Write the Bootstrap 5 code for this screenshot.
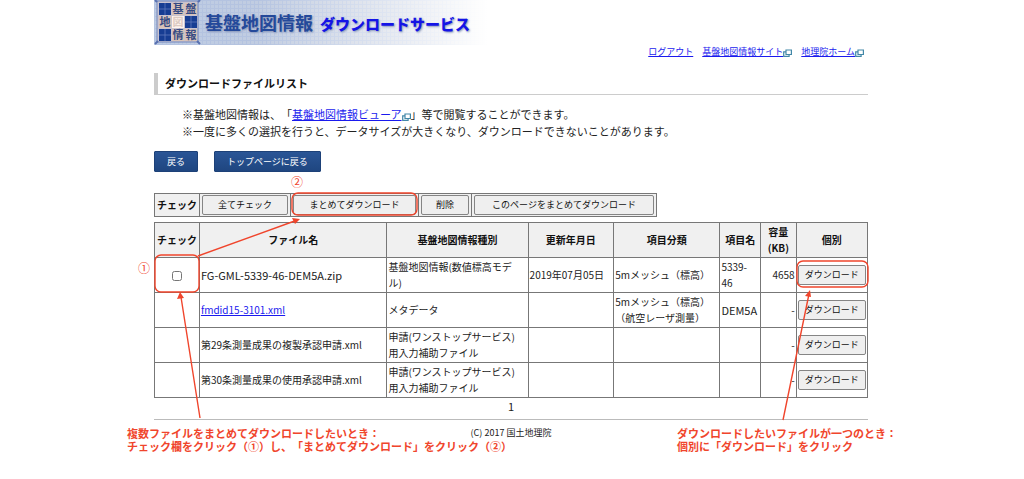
<!DOCTYPE html>
<html lang="ja">
<head>
<meta charset="utf-8">
<meta name="viewport" content="width=device-width, initial-scale=1">
<title>基盤地図情報 ダウンロードサービス</title>
<link href="https://cdn.jsdelivr.net/npm/bootstrap@5.3.0/dist/css/bootstrap.min.css" rel="stylesheet">
<style>
body{font-family:"Noto Sans CJK JP",sans-serif;font-size:11px;line-height:17px;color:#222;background:#fff;padding:0 2px 36px 0;text-spacing-trim:space-all}
a{color:#1a1aee;text-decoration:underline}
.page-wrap{max-width:714px}
.banner{height:45px;width:340px;max-width:100%;
 background:linear-gradient(90deg,rgba(255,255,255,0) 30%,#fff 98%),repeating-linear-gradient(0deg,#b4c3e0 0 1px,transparent 1px 4px),repeating-linear-gradient(90deg,#b4c3e0 0 1px,transparent 1px 4px),linear-gradient(90deg,#bccbe4,#ccd0da)}
.banner h1{font-size:18px;line-height:24px;font-weight:700;color:#24499a;text-shadow:1px 1px 2px #8795b8}
.banner h1 span{font-size:15px;font-weight:900;color:#1414e6;margin-left:7px}
.logo{width:47px;height:45px}
.top-links{font-size:9px;line-height:14px;gap:9px;padding-right:4px}
.win{width:9px;height:8px;vertical-align:-2px}
.list-title{font-size:11px;line-height:21px;font-weight:700;color:#111;border-left:4px solid #ccc;border-bottom:1px solid #ccc;padding-left:7px;margin:14px 0 11px}
.notes{margin:0 0 11px 28px}
.btn-nav{font-size:9px;line-height:19px;color:#fff;background:linear-gradient(#2a5596,#1f4680);border:1px solid #1d4178;border-radius:1px;padding:0 12px}
.btn-nav:hover{color:#fff;background:#1d4178}
.tool-nav{margin-bottom:21px}
.btn-plain{font-size:9px;line-height:18px;color:#111;background:#efefef;border:1px solid #858585;border-radius:2px;padding:0;width:100%;display:block}
.grid-table{border-collapse:collapse;font-size:10px;line-height:16px;color:#222;margin:0}
.grid-table th,.grid-table td{border:1px solid #777;padding:1px}
.grid-table th{background:#f0f0f0;text-align:center;color:#111;font-weight:700}
.grid-table td.tool{background:#f0f0f0;padding:1px 2px}
.files{table-layout:fixed;width:100%;margin-top:5px}
.files td{height:35px}
.files td.code{font-size:11px}
.files input{width:10px;height:10px;margin:0;vertical-align:middle}
.page-foot{border-top:1px solid #bbb;margin-top:4px;padding-top:6px;font-size:9px;line-height:13px}
.red{color:#f0452c}
.marks{inset:0;pointer-events:none}
.marks svg{left:0;top:0;overflow:visible}
.note-l,.note-r,.num{line-height:13px;font-weight:700;white-space:nowrap}
.note-l{left:-27px;top:427px}
.note-r{left:523px;top:427px}
.num{font-weight:400;font-size:12px}
.num-1{left:-16px;top:261px}
.num-2{left:137px;top:175px}
</style>
</head>
<body>
<svg class="d-none" aria-hidden="true">
 <symbol id="win" viewBox="0 0 9 8"><path d="M3 1h5.400v4.500H3zM3 2.800H.7v4.500h5.400V5.500" fill="none" stroke="#4288a8" stroke-width="1.2"/></symbol>
 <symbol id="tile" viewBox="0 0 12 12"><path d="M0 0h12v12H0z" fill="#173d93"/><path d="M6 0v12M0 6h12" stroke="#5f7abb" stroke-width=".8"/></symbol>
</svg>
<div class="page-wrap mx-auto position-relative">
 <header>
  <div class="banner d-flex align-items-center">
   <svg class="logo flex-shrink-0" viewBox="0 0 47 45" role="img" aria-label="基盤地図情報">
    <path d="M3 1h41v41H3z" fill="#c9c3cf" stroke="#7488bc"/>
    <path d="M1 0l2 2M46 0l-2 2M1 44l3-3M46 44l-3-3" stroke="#5870b0" stroke-width="2"/>
    <g fill="#d8c3b8"><path d="M18 3h12v12H18zM31 3h12v12H31zM5 16h12v12H5zM18 29h12v12H18zM31 29h12v12H31z"/></g>
    <path d="M18 16h12v12H18z" fill="#fff5ee"/>
    <use href="#tile" x="5" y="3" width="12" height="12"/><use href="#tile" x="31" y="16" width="12" height="12"/><use href="#tile" x="5" y="29" width="12" height="12"/>
    <g font-size="11" font-weight="700" fill="#354a83" text-anchor="middle"><text x="24" y="13">基</text><text x="37" y="13">盤</text><text x="11" y="26">地</text><text x="24" y="26" fill="#dccac2">図</text><text x="24" y="39">情</text><text x="37" y="39">報</text></g>
   </svg>
   <h1 class="mb-0 ms-1 text-nowrap">基盤地図情報<span>ダウンロードサービス</span></h1>
  </div>
  <nav class="top-links d-flex justify-content-end">
   <a href="#">ログアウト</a>
   <span><a href="#">基盤地図情報サイト</a><svg class="win"><use href="#win"/></svg></span>
   <span><a href="#">地理院ホーム</a><svg class="win"><use href="#win"/></svg></span>
  </nav>
 </header>
 <main>
  <h2 class="list-title">ダウンロードファイルリスト</h2>
  <p class="notes">※基盤地図情報は、「<a href="#">基盤地図情報ビューア</a><svg class="win"><use href="#win"/></svg>」等で閲覧することができます。<br>※一度に多くの選択を行うと、データサイズが大きくなり、ダウンロードできないことがあります。</p>
  <div class="d-flex tool-nav">
   <button type="button" class="btn btn-nav">戻る</button>
   <button type="button" class="btn btn-nav ms-3">トップページに戻る</button>
  </div>
  <table class="grid-table">
   <colgroup><col style="width:45px"><col style="width:91px"><col style="width:128px"><col style="width:53px"><col style="width:185px"></colgroup>
   <tr><th scope="row">チェック</th>
    <td class="tool"><button type="button" class="btn-plain">全てチェック</button></td>
    <td class="tool"><button type="button" class="btn-plain">まとめてダウンロード</button></td>
    <td class="tool"><button type="button" class="btn-plain">削除</button></td>
    <td class="tool"><button type="button" class="btn-plain">このページをまとめてダウンロード</button></td></tr>
  </table>
  <table class="grid-table files">
   <colgroup><col style="width:6.3%"><col style="width:26.3%"><col style="width:19.8%"><col style="width:12%"><col style="width:14.9%"><col style="width:5.7%"><col style="width:5%"><col style="width:10%"></colgroup>
   <thead><tr><th>チェック</th><th>ファイル名</th><th>基盤地図情報種別</th><th>更新年月日</th><th>項目分類</th><th>項目名</th><th>容量<br>(KB)</th><th>個別</th></tr></thead>
   <tbody>
    <tr><td class="text-center"><input type="checkbox" aria-label="FG-GML-5339-46-DEM5A.zip を選択"></td><td class="code">FG-GML-5339-46-DEM5A.zip</td><td>基盤地図情報(数値標高モデ<br>ル)</td><td>2019年07月05日</td><td>5mメッシュ（標高）</td><td>5339-<br>46</td><td class="text-end">4658</td><td><button type="button" class="btn-plain">ダウンロード</button></td></tr>
    <tr><td></td><td><a href="#">fmdid15-3101.xml</a></td><td>メタデータ</td><td></td><td>5mメッシュ（標高）<br>（航空レーザ測量）</td><td class="code">DEM5A</td><td class="text-end">-</td><td><button type="button" class="btn-plain">ダウンロード</button></td></tr>
    <tr><td></td><td>第29条測量成果の複製承認申請.xml</td><td>申請(ワンストップサービス)<br>用入力補助ファイル</td><td></td><td></td><td></td><td class="text-end">-</td><td><button type="button" class="btn-plain">ダウンロード</button></td></tr>
    <tr><td></td><td>第30条測量成果の使用承認申請.xml</td><td>申請(ワンストップサービス)<br>用入力補助ファイル</td><td></td><td></td><td></td><td class="text-end">-</td><td><button type="button" class="btn-plain">ダウンロード</button></td></tr>
   </tbody>
  </table>
  <div class="text-center">1</div>
 </main>
 <footer class="page-foot text-center">(C) 2017 国土地理院</footer>
 <div class="marks position-absolute red">
  <svg class="position-absolute" width="714" height="440" aria-hidden="true">
   <g fill="none" stroke="#f0452c" stroke-width="1.4">
    <rect x="1" y="255" width="44" height="37" rx="6"/><rect x="138" y="193" width="125" height="22" rx="6"/><rect x="643" y="261" width="71" height="26" rx="6"/>
    <path d="M44 256L142 220.500M46 418L27 297M629 420L655 294"/>
   </g>
   <path d="M146 219l-8-1 3 6zM26 292l-3 7 7-1zM656 290l-5 6 6 1z" fill="#f0452c"/>
  </svg>
  <span class="num num-1 position-absolute">①</span><span class="num num-2 position-absolute">②</span>
  <div class="note-l position-absolute">複数ファイルをまとめてダウンロードしたいとき：<br>チェック欄をクリック（①）し、「まとめてダウンロード」をクリック（②）</div>
  <div class="note-r position-absolute">ダウンロードしたいファイルが一つのとき：<br>個別に「ダウンロード」をクリック</div>
 </div>
</div>
<script src="https://cdn.jsdelivr.net/npm/bootstrap@5.3.0/dist/js/bootstrap.bundle.min.js"></script>
</body>
</html>
